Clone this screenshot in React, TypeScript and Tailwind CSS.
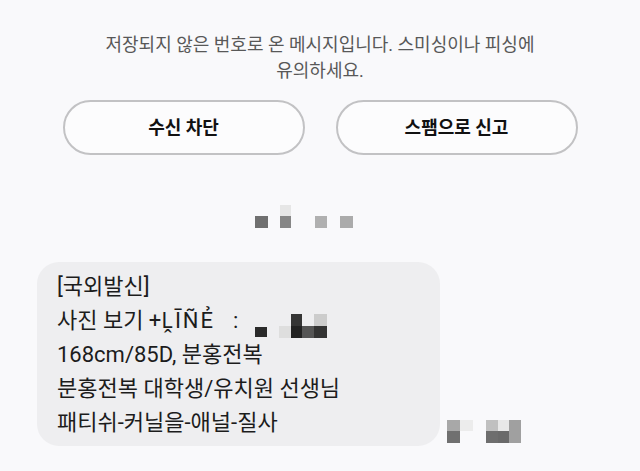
import React from "react";

const font = { fontFamily: 'Roboto, "Noto Sans CJK KR", "Noto Sans", sans-serif' };

export default function App() {
  return (
    <div className="w-[640px] h-[471px] bg-[#f9f9fb] overflow-hidden" style={font}>
      <div className="pt-[32px] text-center text-[18px] leading-[26px] text-[#585858]">
        <p>저장되지 않은 번호로 온 메시지입니다. 스미싱이나 피싱에</p>
        <p>유의하세요.</p>
      </div>
      <div className="mt-[16px] flex justify-center gap-[31px]">
        <button className="w-[242px] h-[55px] rounded-full border-2 border-[#c2c2c4] bg-[#fcfcfd] text-[18px] font-bold text-[#111]">
          수신 차단
        </button>
        <button className="w-[242px] h-[55px] rounded-full border-2 border-[#c2c2c4] bg-[#fcfcfd] text-[18px] font-bold text-[#111]">
          스팸으로 신고
        </button>
      </div>
      <div className="mt-[49px] ml-[254px]">
        <svg width="100" height="26" className="block">
          <rect x="1" y="12" width="13" height="12" fill="#707070" />
          <rect x="26" y="1" width="11" height="11" fill="#e6e6e6" />
          <rect x="26" y="12" width="11" height="12" fill="#868686" />
          <rect x="61" y="12" width="12" height="12" fill="#b0b0b0" />
          <rect x="86" y="12" width="13" height="12" fill="#ababab" />
        </svg>
      </div>
      <div className="mt-[32px] ml-[37px] flex items-end">
        <div className="w-[403px] rounded-[22px] bg-[#eeeef0] pl-[20px] pt-[8px] pb-[6px] text-[22px] leading-[34px] text-[#1c1c1c]">
          <p>[국외발신]</p>
          <p className="whitespace-nowrap flex items-center">
            <span>사진 보기 +<span className="tracking-[2px]">ḼĪÑẺ</span></span>
            <span className="ml-[18px]">:</span>
            <svg width="74" height="25" className="block ml-[16px] mt-[8px]">
              <rect x="1" y="14" width="12" height="10" fill="#2a2a2a" />
              <rect x="25" y="13" width="12" height="12" fill="#dedede" />
              <rect x="37" y="1" width="11" height="12" fill="#353535" />
              <rect x="37" y="13" width="11" height="12" fill="#222" />
              <rect x="48" y="13" width="12" height="12" fill="#555" />
              <rect x="60" y="1" width="13" height="12" fill="#cccccc" />
              <rect x="60" y="13" width="13" height="12" fill="#333" />
            </svg>
          </p>
          <p>168cm/85D, 분홍전복</p>
          <p>분홍전복 대학생/유치원 선생님</p>
          <p>패티쉬-커닐을-애널-질사</p>
        </div>
        <svg width="75" height="25" className="block ml-[7px] mb-[2px]">
          <rect x="0" y="1" width="13" height="12" fill="#a8a8a8" />
          <rect x="0" y="12" width="13" height="12" fill="#707070" />
          <rect x="13" y="1" width="13" height="11" fill="#ececec" />
          <rect x="39" y="1" width="12" height="11" fill="#c0c0c0" />
          <rect x="39" y="12" width="12" height="12" fill="#6e6e6e" />
          <rect x="51" y="1" width="11" height="11" fill="#e8e8e8" />
          <rect x="51" y="12" width="11" height="12" fill="#6a6a6a" />
          <rect x="62" y="1" width="12" height="23" fill="#a0a0a0" />
        </svg>
      </div>
    </div>
  );
}
